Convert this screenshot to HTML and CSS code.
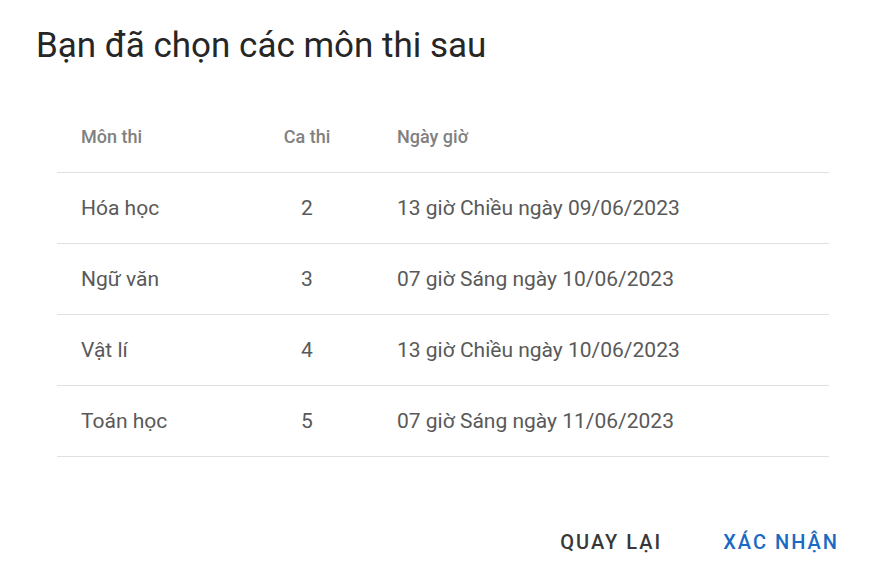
FILE: index.html
```html
<!DOCTYPE html>
<html lang="vi">
<head>
    <meta charset="UTF-8">
    <meta name="viewport" content="width=device-width, initial-scale=1.0">
    <title>Xác nhận môn thi</title>
    <link rel="stylesheet" href="styles.css">
</head>
<body>
    <div class="dialog">
        <h2 class="dialog-title">Bạn đã chọn các môn thi sau</h2>
        <div class="dialog-content">
            <table class="exam-table">
                <thead>
                    <tr>
                        <th class="col-subject">Môn thi</th>
                        <th class="col-shift">Ca thi</th>
                        <th class="col-time">Ngày giờ</th>
                    </tr>
                </thead>
                <tbody>
                    <tr>
                        <td>Hóa học</td>
                        <td class="col-shift">2</td>
                        <td>13 giờ Chiều ngày 09/06/2023</td>
                    </tr>
                    <tr>
                        <td>Ngữ văn</td>
                        <td class="col-shift">3</td>
                        <td>07 giờ Sáng ngày 10/06/2023</td>
                    </tr>
                    <tr>
                        <td>Vật lí</td>
                        <td class="col-shift">4</td>
                        <td>13 giờ Chiều ngày 10/06/2023</td>
                    </tr>
                    <tr>
                        <td>Toán học</td>
                        <td class="col-shift">5</td>
                        <td>07 giờ Sáng ngày 11/06/2023</td>
                    </tr>
                </tbody>
            </table>
        </div>
        <div class="dialog-actions">
            <button class="btn btn-back">Quay lại</button>
            <button class="btn btn-confirm">Xác nhận</button>
        </div>
    </div>
</body>
</html>
```

FILE: styles.css
```css
body {
    font-family: Roboto, "Noto Sans", sans-serif;
    margin: 0;
    padding: 0;
    background-color: #fff;
    color: #222;
}

.dialog {
    width: 884px;
    height: 581px;
    box-sizing: border-box;
    display: flex;
    flex-direction: column;
}

.dialog-title {
    margin: 0;
    padding: 24px 0 0 36px;
    font-size: 35px;
    font-weight: 400;
    line-height: 44px;
    color: #262626;
}

.dialog-content {
    padding: 33px 55px 0 57px;
}

.exam-table {
    width: 100%;
    border-collapse: collapse;
}

.exam-table th,
.exam-table td {
    text-align: left;
    padding: 0 0 0 24px;
    border-bottom: 1px solid #e0e0e0;
}

.exam-table th {
    height: 71px;
    font-size: 18px;
    font-weight: 500;
    color: #808080;
}

.exam-table td {
    height: 70px;
    font-size: 21px;
    color: #595959;
}

.exam-table .col-subject {
    width: 160px;
}

.exam-table .col-shift {
    width: 132px;
    padding: 0;
    text-align: center;
}

.dialog-actions {
    display: flex;
    justify-content: flex-end;
    gap: 61px;
    padding: 65px 45px 0 0;
}

.btn {
    background: none;
    border: none;
    padding: 8px 0;
    font-family: inherit;
    font-size: 20px;
    font-weight: 500;
    letter-spacing: 2px;
    text-transform: uppercase;
    cursor: pointer;
}

.btn-back {
    color: #383838;
}

.btn-confirm {
    color: #1a6ac4;
}
```
